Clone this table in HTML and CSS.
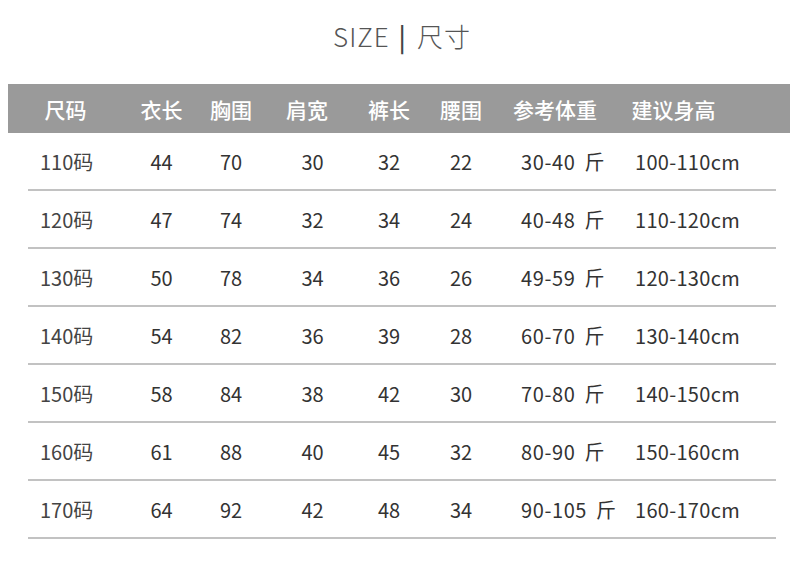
FILE: index.html
```html
<!DOCTYPE html>
<html lang="zh">
<head>
<meta charset="utf-8">
<title>SIZE | 尺寸</title>
<link rel="stylesheet" href="styles.css">
</head>
<body>
<h1 class="title">SIZE<span class="bar">|</span>尺寸</h1>
<div class="table">
  <div class="head">
    <div>尺码</div><div>衣长</div><div>胸围</div><div>肩宽</div><div>裤长</div><div>腰围</div><div>参考体重</div><div>建议身高</div>
  </div>
  <div class="row"><div>110码</div><div>44</div><div>70</div><div>30</div><div>32</div><div>22</div><div>30-40 斤</div><div>100-110cm</div></div>
  <div class="row"><div>120码</div><div>47</div><div>74</div><div>32</div><div>34</div><div>24</div><div>40-48 斤</div><div>110-120cm</div></div>
  <div class="row"><div>130码</div><div>50</div><div>78</div><div>34</div><div>36</div><div>26</div><div>49-59 斤</div><div>120-130cm</div></div>
  <div class="row"><div>140码</div><div>54</div><div>82</div><div>36</div><div>39</div><div>28</div><div>60-70 斤</div><div>130-140cm</div></div>
  <div class="row"><div>150码</div><div>58</div><div>84</div><div>38</div><div>42</div><div>30</div><div>70-80 斤</div><div>140-150cm</div></div>
  <div class="row"><div>160码</div><div>61</div><div>88</div><div>40</div><div>45</div><div>32</div><div>80-90 斤</div><div>150-160cm</div></div>
  <div class="row"><div>170码</div><div>64</div><div>92</div><div>42</div><div>48</div><div>34</div><div>90-105 斤</div><div>160-170cm</div></div>
</div>
</body>
</html>
```
FILE: styles.css
```css
html, body {
  margin: 0;
  padding: 0;
  background: #fff;
}
body {
  width: 790px;
  height: 570px;
  overflow: hidden;
  font-family: "Noto Sans CJK SC", "Noto Sans", sans-serif;
}
.title {
  margin: 0;
  height: 84px;
  display: flex;
  align-items: center;
  justify-content: center;
  font-size: 26px;
  font-weight: 300;
  color: #555;
  letter-spacing: 1px;
  padding: 0 0 14px 14px;
  box-sizing: border-box;
}
.title .bar {
  margin: 0 10px 0 9px;
  font-weight: 500;
  color: #444;
}
.table {
  margin-left: 8px;
  width: 782px;
}
.head {
  display: grid;
  grid-template-columns: 115px 77px 62px 90px 74px 70px 118px 119px;
  height: 49px;
  align-items: center;
  background: #9a9a9a;
  color: #fff;
  font-size: 21px;
  font-weight: 500;
  text-align: center;
}
.row {
  display: grid;
  grid-template-columns: 95px 77px 62px 90px 74px 70px 118px 119px;
  margin-left: 20px;
  width: 748px;
  height: 56px;
  align-items: center;
  border-bottom: 2px solid #c2c2c2;
  color: #333;
  font-size: 20px;
  text-align: center;
  white-space: nowrap;
}
.row > div:nth-child(1) {
  text-align: left;
  padding-left: 12px;
  color: #444;
}
.row > div:nth-child(4) {
  padding-left: 11px;
}
.row > div:nth-child(7) {
  text-align: left;
  padding-left: 25px;
  word-spacing: 4px;
  letter-spacing: 0.6px;
}
.row > div:nth-child(8) {
  text-align: left;
  padding-left: 21px;
  letter-spacing: 0.3px;
}
```
